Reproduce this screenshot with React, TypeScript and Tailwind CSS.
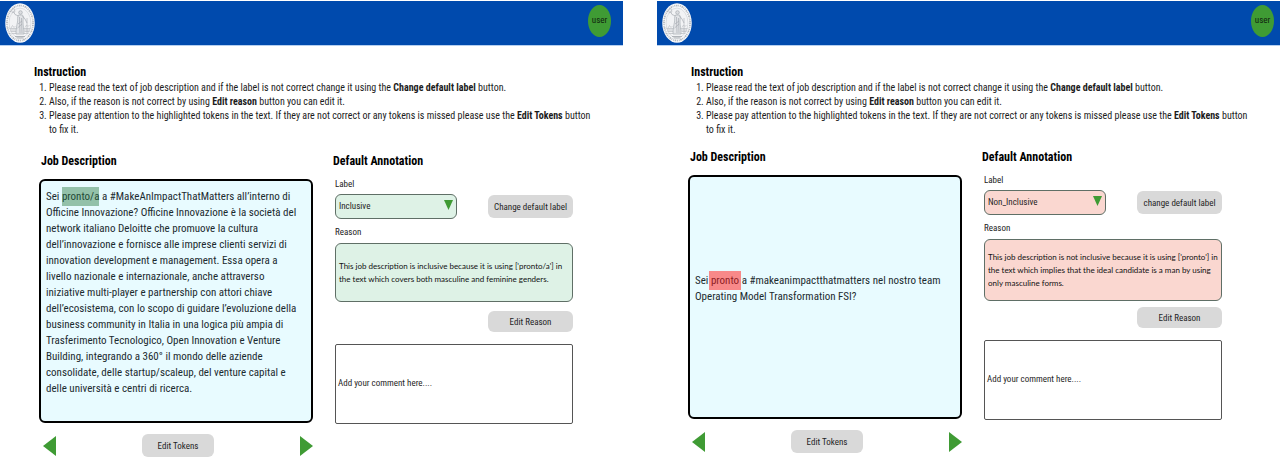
import React, { useId } from 'react';
import { clsx } from 'clsx';

type Tone = 'inclusive' | 'nonInclusive';

interface PanelProps {
  tone: Tone;
  labelValue: string;
  changeText: string;
  reason: string;
  children: React.ReactNode;
}

const buttonClass =
  'rounded-md bg-[#d9d9d9] text-[9px] leading-3 text-[#1f1f1f] hover:bg-[#cdcdcd] cursor-pointer';

function Seal() {
  return (
    <svg viewBox="0 0 60 80" preserveAspectRatio="none" className="h-10 w-[30px]" role="img" aria-label="University seal">
      <ellipse cx="30" cy="40" rx="29.5" ry="39.5" fill="#f7f8fa" />
      <ellipse cx="30" cy="40" rx="26" ry="35" fill="none" stroke="#b4b8bd" strokeWidth="3.5" strokeDasharray="2 1.6 3 1.4 1.5 2" />
      <ellipse cx="30" cy="40" rx="22" ry="30" fill="#f2f3f5" stroke="#c3c6ca" strokeWidth="1" />
      <path d="M9 51h42M10 54h12M38 54h12M11 57h11M39 57h10M13 61h9M38 61h9" stroke="#b9bcc1" strokeWidth="1.4" />
      <path d="M12 50l3-5 3 4 3-3M40 49l3-5 3 3 3-3" fill="none" stroke="#b9bcc1" strokeWidth="1.2" />
      <circle cx="31" cy="19" r="3.6" fill="#dcdee1" stroke="#9ca1a7" strokeWidth="1.2" />
      <path d="M27 24c-3 4-1 9-2 14s-3 13-3 24h16c0-9-2-17-2-24s2-10-1-14z" fill="#e3e5e8" stroke="#a6abb1" strokeWidth="1.3" />
      <path d="M27 26l-7-3-3-6M35 26l5 6 4 8M29 28l1 32M33 30l1 30M26 42l8-6M25 50l9-8" fill="none" stroke="#a6abb1" strokeWidth="1.4" />
      <path d="M13 14l5-3 2 6-5 3zM44 30v30" fill="none" stroke="#b0b4b9" strokeWidth="1.3" />
      <path d="M20 67h20M23 70h14" stroke="#b0b4b9" strokeWidth="2" />
    </svg>
  );
}

function Arrow({ direction }: { direction: 'left' | 'right' }) {
  return (
    <svg viewBox="0 0 13 20" className="h-5 w-[13px]" aria-hidden="true">
      <path d={direction === 'left' ? 'M13 0v20L0 10z' : 'M0 0v20L13 10z'} fill="#3f9b34" />
    </svg>
  );
}

function Instructions() {
  return (
    <section className="pr-6 pl-[34px]">
      <h1 className="text-xs leading-4 font-bold">Instruction</h1>
      <ol className="mt-px list-decimal pl-[15px] text-[10px] leading-[14px] text-[#1c1c1c]">
        <li>
          Please read the text of job description and if the label is not correct change it using the{' '}
          <strong>Change default label</strong> button.
        </li>
        <li>
          Also, if the reason is not correct by using <strong>Edit reason</strong> button you can edit it.
        </li>
        <li>
          Please pay attention to the highlighted tokens in the text. If they are not correct or any tokens is missed
          please use the <strong>Edit Tokens</strong> button to fix it.
        </li>
      </ol>
    </section>
  );
}

function Panel({ tone, labelValue, changeText, reason, children }: PanelProps) {
  const id = useId();
  const inclusive = tone === 'inclusive';
  const fill = inclusive ? 'bg-[#def2e6]' : 'bg-[#fad7d0]';

  return (
    <main className="min-w-0">
      <header
        className={clsx(
          'mt-px flex h-[45px] items-center justify-between border-b border-[#b5cff0] bg-[#004aad] pl-[5px]',
          inclusive ? 'pr-3' : 'pr-1.5',
        )}
      >
        <Seal />
        <button className="mb-1 h-8 w-[23px] cursor-pointer rounded-[50%] bg-[#3f9b34] text-[9px] text-[#10240e]">
          user
        </button>
      </header>

      <div className="pt-[18px]">
        <Instructions />
      </div>

      <div
        className={clsx(
          'grid grid-cols-[274fr_240fr] gap-5',
          inclusive ? 'pt-4 pr-[50px] pl-[39px]' : 'pt-3 pr-[58px] pl-[31px]',
        )}
      >
        <section>
          <h2 className="pl-0.5 text-xs leading-4 font-bold">Job Description</h2>
          <div
            className={clsx(
              'mt-2.5 flex h-[244px] rounded-md border-2 border-black bg-[#e8fbff] pr-2.5 pl-[5px] text-[11px] leading-4 text-[#1c2b30]',
              inclusive ? 'items-start pt-2' : 'items-center pb-4',
            )}
          >
            <p>{children}</p>
          </div>
          <div className="mt-[11px] flex items-center justify-between pl-1">
            <button aria-label="Previous" className="cursor-pointer">
              <Arrow direction="left" />
            </button>
            <button className={clsx(buttonClass, 'h-[23px] w-[72px]')}>Edit Tokens</button>
            <button aria-label="Next" className="cursor-pointer">
              <Arrow direction="right" />
            </button>
          </div>
        </section>

        <section>
          <h2 className="text-xs leading-4 font-bold">Default Annotation</h2>
          <div className="flex flex-col pl-0.5">
            <label htmlFor={`${id}-label`} className="mt-[9px] text-[9px] leading-3 text-[#222]">
              Label
            </label>
            <div className="mt-1 flex items-center justify-between">
              <div className="relative flex">
                <select
                  id={`${id}-label`}
                  defaultValue={labelValue}
                  className={clsx(
                    'h-[25px] w-[122px] appearance-none rounded-md border border-[#5f6f66] px-[3px] text-[9px] text-[#1f1f1f]',
                    fill,
                  )}
                >
                  <option>Inclusive</option>
                  <option>Non_Inclusive</option>
                </select>
                <svg viewBox="0 0 9 10" className="pointer-events-none absolute top-1.5 right-1 h-2.5 w-[9px]" aria-hidden="true">
                  <path d="M0 0h9L4.500 10z" fill="#3f9b34" />
                </svg>
              </div>
              <button className={clsx(buttonClass, 'h-[23px] w-[85px]')}>{changeText}</button>
            </div>

            <h3 className="mt-[7px] text-[9px] leading-3 text-[#222]">Reason</h3>
            <p
              className={clsx(
                "mt-[5px] flex items-center rounded-md border border-[#5f6f66] pl-[3px] font-['Lato',sans-serif] text-[8px] leading-[13px] text-[#111]",
                fill,
                inclusive ? 'h-[59px]' : 'h-[62px]',
              )}
            >
              {reason}
            </p>
            <button className={clsx(buttonClass, 'h-[21px] w-[85px] self-end', inclusive ? 'mt-[9px]' : 'mt-1.5')}>
              Edit Reason
            </button>
            <textarea
              aria-label="Comment"
              placeholder="Add your comment here...."
              className="mt-3 h-20 resize-none rounded-xs border border-[#555] bg-white px-0.5 pt-8 text-[9px] leading-3 placeholder:text-[#1f1f1f]"
            />
          </div>
        </section>
      </div>
    </main>
  );
}

export default function App() {
  return (
    <div className="grid grid-cols-2 gap-[34px] bg-white font-['Roboto_Condensed','Roboto','Liberation_Sans',sans-serif] text-black">
      <Panel
        tone="inclusive"
        labelValue="Inclusive"
        changeText="Change default label"
        reason="This job description is inclusive because it is using ['pronto/a'] in the text which covers both masculine and feminine genders."
      >
        Sei <mark className="bg-[#93c1a9] py-[3px] text-[#1f4a35]">pronto/a</mark> a #MakeAnImpactThatMatters all’interno di
        Officine Innovazione? Officine Innovazione è la società del network italiano Deloitte che promuove la cultura
        dell’innovazione e fornisce alle imprese clienti servizi di innovation development e management. Essa opera a
        livello nazionale e internazionale, anche attraverso iniziative multi-player e partnership con attori chiave
        dell’ecosistema, con lo scopo di guidare l’evoluzione della business community in Italia in una logica più ampia
        di Trasferimento Tecnologico, Open Innovation e Venture Building, integrando a 360° il mondo delle aziende
        consolidate, delle startup/scaleup, del venture capital e delle università e centri di ricerca.
      </Panel>
      <Panel
        tone="nonInclusive"
        labelValue="Non_Inclusive"
        changeText="change default label"
        reason="This job description is not inclusive because it is using ['pronto'] in the text which implies that the ideal candidate is a man by using only masculine forms."
      >
        Sei <mark className="-mx-0.5 bg-[#f88989] px-0.5 py-[3px] text-[#8f1d24]">pronto</mark> a #makeanimpactthatmatters nel nostro team
        Operating Model Transformation FSI?
      </Panel>
    </div>
  );
}
